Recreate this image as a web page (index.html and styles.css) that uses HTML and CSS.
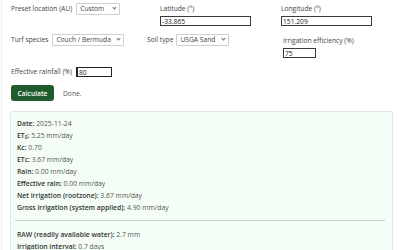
FILE: index.html
```html
<!DOCTYPE html>
<html lang="en">
<head>
<meta charset="utf-8">
<title>Turf irrigation calculator</title>
<link rel="stylesheet" href="styles.css">
</head>
<body>
<div class="page">
  <form class="form">
    <div class="row row-1">
      <label class="inline-field">Preset location (AU)
        <span class="select-wrap sel-preset"><select><option>Custom</option></select></span>
      </label>
      <label class="stack-field lat">Latitude (°)
        <input class="num wide" type="text" value="-33.865">
      </label>
      <label class="stack-field lon">Longitude (°)
        <input class="num wide" type="text" value="151.209">
      </label>
    </div>
    <div class="row row-2">
      <label class="inline-field">Turf species
        <span class="select-wrap sel-turf"><select><option>Couch / Bermuda</option></select></span>
      </label>
      <label class="inline-field soil">Soil type
        <span class="select-wrap sel-soil"><select><option>USGA Sand</option></select></span>
      </label>
      <label class="stack-field eff">Irrigation efficiency (%)
        <input class="num small" type="text" value="75">
      </label>
    </div>
    <div class="row row-3">
      <label class="inline-field">Effective rainfall (%)
        <input class="num rain" type="text" value="80">
      </label>
    </div>
    <div class="actions">
      <button type="button" class="btn">Calculate</button>
      <span class="status">Done.</span>
    </div>
  </form>
  <div class="result">
    <div class="line"><b>Date:</b> 2025-11-24</div>
    <div class="line"><b>ET<sub>0</sub>:</b> 5.25 mm/day</div>
    <div class="line"><b>Kc:</b> 0.70</div>
    <div class="line"><b>ETc:</b> 3.67 mm/day</div>
    <div class="line"><b>Rain:</b> 0.00 mm/day</div>
    <div class="line"><b>Effective rain:</b> 0.00 mm/day</div>
    <div class="line"><b>Net irrigation (rootzone):</b> 3.67 mm/day</div>
    <div class="line"><b>Gross irrigation (system applied):</b> 4.90 mm/day</div>
    <hr class="sep">
    <div class="line"><b>RAW (readily available water):</b> 2.7 mm</div>
    <div class="line"><b>Irrigation interval:</b> 0.7 days</div>
  </div>
</div>
</body>
</html>
```
FILE: styles.css
```css
html, body {
  margin: 0;
  padding: 0;
  background: #ffffff;
}
body {
  font-family: "Open Sans", "Noto Sans", sans-serif;
  font-size: 6.7px;
  color: #444;
}
.page {
  margin-left: 1px;
  border-left: 1px solid #efefef;
  padding: 3px 7px 0 8px;
  min-height: 250px;
  box-sizing: border-box;
}
.form {
  padding-left: 1px;
}
.row {
  display: flex;
  align-items: flex-start;
}
.row-2 {
  margin-top: 8px;
}
.row-3 {
  margin-top: 9px;
  align-items: center;
}
.inline-field {
  display: flex;
  align-items: center;
  gap: 4px;
  height: 12px;
  line-height: 12px;
  white-space: nowrap;
}
.stack-field {
  display: flex;
  flex-direction: column;
  line-height: 12px;
  white-space: nowrap;
}
.stack-field input {
  margin-top: 1px;
}
.row-1 .inline-field { width: 149px; }
.lon { margin-left: 30px; }
.row-2 .inline-field:first-child { width: 136px; }
.soil { width: 136px; gap: 3px; }
.eff { margin-top: 1px; }
.row-3 .inline-field { height: 10px; }

.select-wrap {
  position: relative;
  display: inline-block;
  height: 12px;
}
.select-wrap::after {
  content: "";
  position: absolute;
  right: 4px;
  top: 3px;
  width: 2px;
  height: 2px;
  border-right: 1px solid #666;
  border-bottom: 1px solid #666;
  transform: rotate(45deg);
  pointer-events: none;
}
.select-wrap select {
  -webkit-appearance: none;
  appearance: none;
  box-sizing: border-box;
  height: 12px;
  margin: 0;
  padding: 0 8px 0 3px;
  border: 1px solid #cfcfcf;
  border-radius: 1px;
  background: #fff;
  font-family: inherit;
  font-size: 6.7px;
  line-height: 10px;
  color: #444;
  width: 100%;
}
.sel-preset { width: 44px; }
.sel-turf { width: 72px; }
.sel-soil { width: 53px; }

.num {
  box-sizing: border-box;
  height: 10px;
  margin: 0;
  padding: 0 1px;
  border: 1px solid #3a3a3a;
  border-radius: 0;
  font-family: inherit;
  font-size: 6.7px;
  line-height: 8px;
  color: #222;
  background: #fff;
}
.wide { width: 91px; }
.small { width: 33px; }
.rain { width: 36px; border-color: #222; border-left-width: 2px; }

.actions {
  display: flex;
  align-items: center;
  gap: 9px;
  margin-top: 8px;
}
.btn {
  height: 16px;
  width: 43px;
  padding: 0;
  border: none;
  border-radius: 3px;
  background: #1f5b2d;
  color: #fff;
  font-family: inherit;
  font-size: 6.7px;
  font-weight: 600;
}
.status {
  color: #555;
}

.result {
  margin-top: 10px;
  border: 1px solid #dfe7e1;
  border-radius: 3px;
  background: #f5fdf7;
  padding: 6px 7px 10px 6px;
  box-shadow: 0 0 1px rgba(0,0,0,0.06);
  font-size: 6.8px;
}
.line {
  line-height: 12px;
  color: #555;
  white-space: nowrap;
}
.line b {
  color: #333;
  font-weight: 600;
}
.line sub {
  font-size: 5px;
  line-height: 0;
  vertical-align: -1px;
}
.sep {
  margin: 6px 0 8px -2px;
  border: none;
  border-top: 1px solid #c9cfcb;
  height: 0;
  width: 370px;
}
```
